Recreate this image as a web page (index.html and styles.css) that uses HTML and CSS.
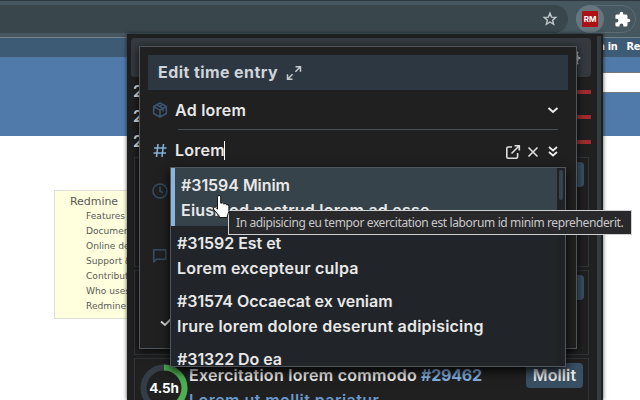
FILE: index.html
```html
<!DOCTYPE html>
<html lang="en">
<head>
<meta charset="utf-8">
<title>Redmine</title>
<link rel="stylesheet" href="styles.css">
</head>
<body>
<div class="browser">
  <div class="toolbar">
    <div class="address"><svg class="star" width="16" height="16" viewBox="0 0 16 16"><path d="M8 2.200 9.600 6.100 13.800 6.400 10.600 9.200 11.600 13.300 8 11 4.400 13.300 5.400 9.200 2.200 6.400 6.400 6.100Z" fill="none" stroke="#c3c8ca" stroke-width="1.400"/></svg></div>
    <div class="extensions">
      <div class="ext-active"><span class="rm">RM</span></div>
      <svg class="puzzle" width="17" height="17" viewBox="0 0 24 24"><path fill="#fff" d="M20.500 11H19V7a2 2 0 0 0-2-2h-4V3.500a2.500 2.500 0 0 0-5 0V5H4a2 2 0 0 0-2 2v3.800h1.500a2.700 2.700 0 0 1 0 5.400H2V20a2 2 0 0 0 2 2h3.800v-1.500a2.700 2.700 0 0 1 5.400 0V22H17a2 2 0 0 0 2-2v-4h1.500a2.500 2.500 0 0 0 0-5z"/></svg>
    </div>
  </div>
  <div class="top-menu"><span>n in</span><span>Re</span></div>
  <div class="site-header"><div class="search"></div></div>
  <div class="wiki">
    <div class="toc">
      <div class="toc-title">Redmine</div>
      <div>Features</div><div>Documentation</div><div>Online demo</div><div>Support &amp; getting</div><div>Contribute</div><div>Who uses Redmine</div><div>Redmine books</div>
    </div>
  </div>
</div>

<div class="popup">
  <div class="popup-main">
    <div class="popup-header"><svg width="18" height="18" viewBox="0 0 24 24" fill="none" stroke="#b8bcc0" stroke-width="2.500"><circle cx="12" cy="12" r="3"/><circle cx="12" cy="12" r="8"/><path d="M12 1v3m0 16v3M1 12h3m16 0h3M4 4l2 2m12 12 2 2M4 20l2-2M18 6l2-2"/></svg></div>
    <div class="days">
      <div class="day"><span>2</span><i></i></div>
      <div class="day"><span>2</span><i></i></div>
      <div class="day"><span>2</span><i></i></div>
    </div>
    <div class="card card-one"><span class="tag"></span></div>
    <div class="card card-two"><span class="tag"></span></div>
    <div class="card card-three">
      <div class="gauge"><svg width="48" height="48" viewBox="0 0 48 48"><circle cx="24" cy="24" r="20.500" fill="none" stroke="#343d45" stroke-width="6"/><path d="M24 3.500A20.500 20.500 0 0 1 24 44.500" fill="none" stroke="#4caf50" stroke-width="6"/></svg><b>4.5h</b></div>
      <div class="card-text"><div><span class="subject">Exercitation lorem commodo</span> <b class="issue">#29462</b></div><div class="project">Lorem ut mollit pariatur</div></div>
      <span class="tag">Mollit</span>
    </div>
  </div>
  <div class="popup-scroll"></div>
</div>

<div class="dialog">
  <div class="dialog-title"><span>Edit time entry</span><svg width="16" height="16" viewBox="0 0 16 16" fill="none" stroke="#c6cacd" stroke-width="1.500"><path d="M9.500 1.700h5v5M14.500 1.700 9.400 6.800M6.500 14.300h-5v-5M1.500 14.300l5.100-5.100"/></svg></div>
  <div class="field project-field">
    <svg class="field-icon" width="16" height="16" viewBox="0 0 24 24" fill="none" stroke="#3b5570" stroke-width="2.400" stroke-linejoin="round"><path d="M12 1.500 21.500 6.800v10.400L12 22.500 2.500 17.200V6.800zM2.500 6.800l9.500 5.400 9.500-5.400M12 12.200v10.300M7 4.300l9.500 5.400v4M11.500 7l4-3"/></svg>
    <span class="value">Ad lorem</span>
    <svg class="chevron" width="12" height="12" viewBox="0 0 12 12" fill="none" stroke="#eee" stroke-width="1.900"><path d="m1.500 4 4.500 4 4.500-4"/></svg>
  </div>
  <div class="field issue-field">
    <svg class="field-icon" width="16" height="16" viewBox="0 0 16 16" fill="none" stroke="#82afd6" stroke-width="1.600"><path d="M2 6h12.500M1.500 11H14M6 2 4.500 15M11.500 2 10 15"/></svg>
    <span class="value typed">Lorem</span>
    <span class="actions">
      <svg width="16" height="16" viewBox="0 0 16 16" fill="none" stroke="#dedede" stroke-width="1.600"><path d="M7 3H3.200Q1.800 3 1.800 4.400v8.400q0 1.400 1.400 1.400h8q1.400 0 1.400-1.400V9M9.500 1.700h4.800v4.800M14.300 1.700 6.500 9.500"/></svg>
      <svg width="12" height="12" viewBox="0 0 12 12" fill="none" stroke="#dedede" stroke-width="1.600"><path d="m1.500 1.500 9 9m0-9-9 9"/></svg>
      <svg width="10" height="12" viewBox="0 0 10 12" fill="none" stroke="#eee" stroke-width="1.700"><path d="m1 1 4 3.500L9 1M1 6l4 3.500L9 6"/></svg>
    </span>
  </div>
  <div class="field time-field"><svg class="field-icon" width="16" height="16" viewBox="0 0 16 16" fill="none" stroke="#354c62" stroke-width="1.600"><circle cx="8" cy="8" r="7"/><path d="M8 3.500V8l3 1.700"/></svg></div>
  <div class="field comment-field"><svg class="field-icon" width="16" height="16" viewBox="0 0 16 16" fill="none" stroke="#354c62" stroke-width="1.600" stroke-linejoin="round"><path d="M2.200 1.800h11.600v9.400H4.600L1.700 14V1.800z"/></svg></div>
  <svg class="check" width="14" height="10" viewBox="0 0 14 10" fill="none" stroke="#dedede" stroke-width="1.800"><path d="m1 4.500 4 3.500 7-7"/></svg>
</div>

<div class="menu">
  <div class="options">
    <div class="option active"><div class="number">#31594 Minim</div><div>Eiusmod nostrud lorem ad esse</div></div>
    <div class="option"><div class="number">#31592 Est et</div><div>Lorem excepteur culpa</div></div>
    <div class="option"><div class="number">#31574 Occaecat ex veniam</div><div>Irure lorem dolore deserunt adipisicing</div></div>
    <div class="option"><div class="number">#31322 Do ea</div></div>
  </div>
  <div class="menu-scroll"><i></i></div>
</div>
<div class="tooltip">In adipisicing eu tempor exercitation est laborum id minim reprehenderit.</div>
<svg class="cursor" width="19" height="25" viewBox="0 0 19 25"><path d="M5.500 14V3.200q0-1.800 1.600-1.800t1.600 1.800v6q2.200-1 3 .7 2-.8 2.700.8 2.500-.4 2.500 1.800v4.700L15.300 22v1.500H7.200V22L2 15.800q-1.200-2 .2-2.700 1.100-.5 3.300 2z" fill="#fff" stroke="#15191c"/></svg>
</body>
</html>
```

FILE: styles.css
```css
* { box-sizing: border-box; }
body {
  margin: 0;
  width: 640px;
  height: 400px;
  overflow: hidden;
  position: relative;
  background: #fff;
  font: 600 16px/25px Inter, "Liberation Sans", sans-serif;
  color: #e8e8e8;
}
svg { display: block; flex: none; }

/* browser window */
.toolbar {
  height: 38px;
  background: #46575f;
  border-top: 1px solid #2c373d;
  border-bottom: 1px solid #71828a;
  padding-top: 4px;
  display: flex;
}
.address {
  width: 568px;
  height: 28px;
  border-radius: 0 14px 14px 0;
  background: #39464c;
  display: flex;
  align-items: center;
  justify-content: flex-end;
  padding-right: 10px;
}
.extensions {
  width: 60px;
  height: 28px;
  margin-left: 8px;
  border: 1px solid #5b6c74;
  border-radius: 14px;
  display: flex;
  align-items: center;
  gap: 10px;
}
.ext-active {
  width: 28px;
  height: 28px;
  flex: none;
  margin-left: -1px;
  border-radius: 50%;
  background: #65767e;
  display: flex;
  align-items: center;
  justify-content: center;
}
.rm {
  width: 16px;
  height: 16px;
  border-radius: 1px;
  background: #ad1015;
  color: #fff;
  font: 700 8px/16px Inter, sans-serif;
  text-align: center;
}
.top-menu {
  height: 19px;
  background: #3e5b76;
  display: flex;
  gap: 9px;
  padding-left: 598px;
  font: 700 9.800px/18px "DejaVu Sans", sans-serif;
  letter-spacing: -.3px;
  color: #fff;
  white-space: nowrap;
}
.site-header {
  height: 79px;
  background: #507aaa;
  padding-top: 15px;
  display: flex;
  justify-content: flex-end;
}
.search {
  width: 50px;
  height: 21px;
  background: #fff;
  border: 1px solid #777;
  border-right: 0;
}
.wiki { padding: 54px 0 0 54px; }
.toc {
  width: 200px;
  height: 129px;
  border: 1px solid #ddd;
  background: #ffffdd;
  padding: 3px 0 0 31px;
  font: 9.100px/15px "DejaVu Sans", sans-serif;
  color: #595959;
  white-space: nowrap;
}
.toc-title {
  margin-left: -16px;
  font-size: 11px;
  letter-spacing: -.05px;
}

/* extension popup */
.popup {
  position: absolute;
  left: 127px;
  top: 34px;
  width: 476px;
  height: 366px;
  background: #202020;
  box-shadow: 0 0 4px rgba(0, 0, 0, .7);
  display: flex;
}
.popup-main { width: 470px; padding: 4px 0 0 4px; height: 366px; overflow: hidden; }
.popup-scroll { width: 4px; margin-top: 2px; background: #343c42; }
.popup-header {
  width: 460px;
  height: 39px;
  border-radius: 4px;
  background: #343a40;
  display: flex;
  align-items: center;
  justify-content: flex-end;
  padding-right: 10px;
}
.days { width: 460px; height: 80px; padding-top: 2px; }
.day {
  height: 25px;
  padding-left: 2px;
  display: flex;
  align-items: center;
  justify-content: space-between;
}
.day i { width: 200px; height: 4px; background: #a12a2d; }
.card {
  width: 455px;
  margin: 0 0 3px 3px;
  border: 1px solid #2f3438;
  padding: 4px 4px 4px 5px;
  display: flex;
  justify-content: flex-end;
}
.card-one { height: 110px; }
.card-two { height: 85px; }
.card-three { height: 90px; justify-content: flex-start; }
.tag {
  width: 57px;
  height: 25px;
  border-radius: 4px;
  background: #394f63;
  text-align: center;
  letter-spacing: .1px;
}
.gauge {
  width: 48px;
  height: 48px;
  margin: 1px 1px 0 0;
  display: grid;
  place-items: center;
}
.gauge svg, .gauge b { grid-area: 1 / 1; }
.gauge b { font-size: 13.500px; font-weight: 700; letter-spacing: -.1px; color: #fff; }
.card-text { width: 337px; height: 60px; white-space: nowrap; }
.subject { letter-spacing: .27px; }
.issue { font-weight: 700; letter-spacing: -.2px; color: #83afe0; }
.project { color: #6898cb; letter-spacing: .45px; }

/* edit dialog */
.dialog {
  position: absolute;
  left: 139px;
  top: 46px;
  width: 438px;
  height: 303px;
  border: 1px solid #50565c;
  background: #202020;
  padding: 8px;
  box-shadow: 0 2px 8px rgba(0, 0, 0, .8);
}
.dialog-title {
  height: 35px;
  background: #2d3741;
  padding: 0 10px;
  display: flex;
  align-items: center;
  gap: 9px;
  font-weight: 700;
  color: #ced4da;
}
.dialog-title span { width: 119px; white-space: nowrap; letter-spacing: .42px; }
.field { display: flex; align-items: center; padding: 0 10px 0 4px; }
.project-field {
  height: 40px;
  background: linear-gradient(#4b5055, #4b5055) 30px 39px / 380px 1px no-repeat;
}
.issue-field { height: 40px; }
.value { margin-left: 7px; flex: 1; letter-spacing: .25px; }
.typed::after {
  content: "";
  display: inline-block;
  width: 1px;
  height: 19px;
  background: #fff;
  vertical-align: -4px;
  margin-left: -1px;
}
.chevron { margin-right: -1px; }
.actions { display: flex; align-items: center; gap: 6px; padding-top: 3px; }
.actions svg:last-child { margin-left: 3px; }
.time-field { height: 42px; }
.comment-field { height: 88px; }
.check { margin: 17px 0 0 12px; }

/* issue suggestions */
.menu {
  position: absolute;
  left: 170px;
  top: 167px;
  width: 396px;
  height: 200px;
  border: 1px solid #50565c;
  background: #212529;
  display: flex;
  box-shadow: 0 4px 10px rgba(0, 0, 0, .85);
}
.options { width: 386px; height: 198px; overflow: hidden; }
.option { height: 58px; padding: 5px 6px 3px; white-space: nowrap; letter-spacing: .22px; }
.number { letter-spacing: -.05px; }
.option.active { background: #36434b; border-left: 4px solid #89b4db; }
.menu-scroll { width: 8px; padding: 2px; background: #202225; }
.menu-scroll i { display: block; width: 4px; height: 30px; border-radius: 2px; background: #36434b; }

.tooltip {
  position: absolute;
  left: 228px;
  top: 210px;
  width: 404px;
  height: 25px;
  border: 1px solid #d0d0d0;
  background: #29292c;
  padding-left: 7px;
  font: 12px/24px "Noto Sans", sans-serif;
  letter-spacing: -.38px;
  color: #c8c8c8;
  white-space: nowrap;
}
.cursor { position: absolute; left: 212px; top: 194px; }
```
